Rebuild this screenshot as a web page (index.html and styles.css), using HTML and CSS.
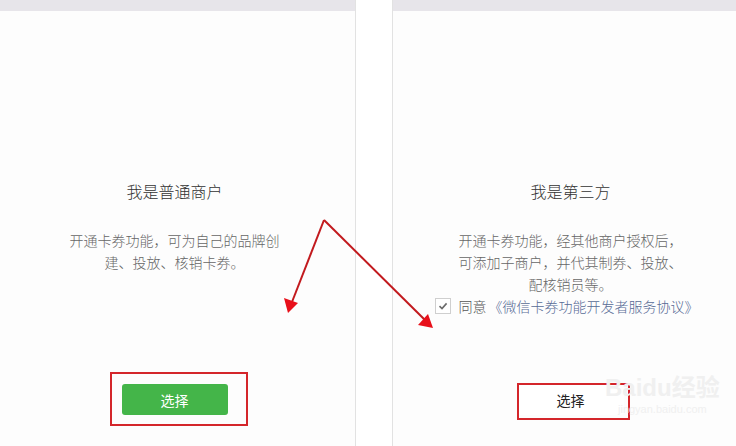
FILE: index.html
```html
<!DOCTYPE html>
<html lang="zh">
<head>
  <meta charset="UTF-8">
  <title>选择商户类型</title>
  <link rel="stylesheet" href="styles.css">
</head>
<body>

<div class="cards">
  <div class="card card-left">
    <div class="card-head"></div>
    <div class="card-body">
      <h3>我是普通商户</h3>
      <p class="desc">开通卡券功能，可为自己的品牌创<br>建、投放、核销卡券。</p>
      <button class="btn btn-green">选择</button>
    </div>
  </div>

  <div class="card card-right">
    <div class="card-head"></div>
    <div class="card-body">
      <h3>我是第三方</h3>
      <p class="desc">开通卡券功能，经其他商户授权后，<br>可添加子商户，并代其制券、投放、<br>配核销员等。</p>
      <label class="agree">
        <span class="checkbox">
          <svg width="10" height="10" viewBox="0 0 10 10"><path d="M1.5 5.2 L4 7.6 L8.6 2.4" fill="none" stroke="#6b6b6b" stroke-width="1.6"/></svg>
        </span>
        同意<a href="#">《微信卡券功能开发者服务协议》</a>
      </label>
      <button class="btn btn-plain">选择</button>
    </div>
  </div>
</div>

<!-- 标注 -->
<div class="mark mark-left"></div>
<div class="mark mark-right"></div>

<svg class="arrows" width="736" height="446" viewBox="0 0 736 446">
  <line x1="324" y1="220" x2="292" y2="302" stroke="#c21a1e" stroke-width="2"/>
  <line x1="324" y1="220" x2="425" y2="320" stroke="#c21a1e" stroke-width="2"/>
  <polygon points="288,313 284,298 298,303" fill="#e8101a"/>
  <polygon points="433,328 418,325 428,314" fill="#e8101a"/>
</svg>

<div class="watermark">
  <span class="wm-big">Baidu经验</span>
  <span class="wm-small">jingyan.baidu.com</span>
</div>

</body>
</html>
```

FILE: styles.css
```css
* {
  box-sizing: border-box;
}
body {
  margin: 0;
  background: #fff;
  font-family: "Noto Sans CJK SC", "Liberation Sans", sans-serif;
  color: #333;
  overflow: hidden;
  width: 736px;
  height: 446px;
  position: relative;
}
.cards {
  display: flex;
  gap: 36px;
}
.card {
  width: 356px;
  flex-shrink: 0;
  height: 446px;
  background: #fdfdfd;
  display: flex;
  flex-direction: column;
}
.card-left {
  border-right: 1px solid #e2e2e2;
}
.card-right {
  border-left: 1px solid #e2e2e2;
}
.card-head {
  height: 11px;
  background: #e7e5ea;
}
.card-body {
  flex: 1;
  display: flex;
  flex-direction: column;
  align-items: center;
  padding: 168px 0 31px;
  text-align: center;
}
.card-left .card-body {
  padding-right: 6px;
}
h3 {
  margin: 0;
  font-size: 16px;
  font-weight: 300;
  line-height: 24px;
  color: #333;
}
.desc {
  margin: 26px 0 0;
  font-size: 14px;
  font-weight: 300;
  line-height: 22px;
  color: #666;
}
.agree {
  display: flex;
  align-items: center;
  gap: 8px;
  margin-top: 1px;
  margin-right: 8px;
  font-size: 14px;
  font-weight: 300;
  line-height: 20px;
  color: #555;
}
.agree a {
  color: #576b95;
  text-decoration: none;
  margin-left: -6px;
}
.checkbox {
  width: 16px;
  height: 16px;
  border: 1px solid #cfcfcf;
  background: #fff;
  display: flex;
  align-items: center;
  justify-content: center;
}
.btn {
  margin-top: auto;
  width: 106px;
  height: 31px;
  border: none;
  border-radius: 3px;
  font-family: inherit;
  font-size: 14px;
  cursor: pointer;
}
.btn-green {
  background: #44b549;
  color: #fff;
}
.btn-plain {
  background: #fff;
  color: #222;
}
.mark {
  position: absolute;
  border: 2px solid #d4262b;
}
.mark-left {
  left: 110px;
  top: 372px;
  width: 138px;
  height: 54px;
}
.mark-right {
  left: 517px;
  top: 383px;
  width: 113px;
  height: 37px;
}
.arrows {
  position: absolute;
  left: 0;
  top: 0;
}
.watermark {
  position: absolute;
  left: 605px;
  top: 374px;
  display: flex;
  flex-direction: column;
  align-items: center;
  color: #f0f0f0;
  font-family: "Liberation Sans", "Noto Sans CJK SC", sans-serif;
  font-weight: bold;
  pointer-events: none;
}
.wm-big {
  font-size: 24px;
  line-height: 28px;
}
.wm-small {
  font-size: 11px;
  line-height: 14px;
  font-weight: normal;
}
```
